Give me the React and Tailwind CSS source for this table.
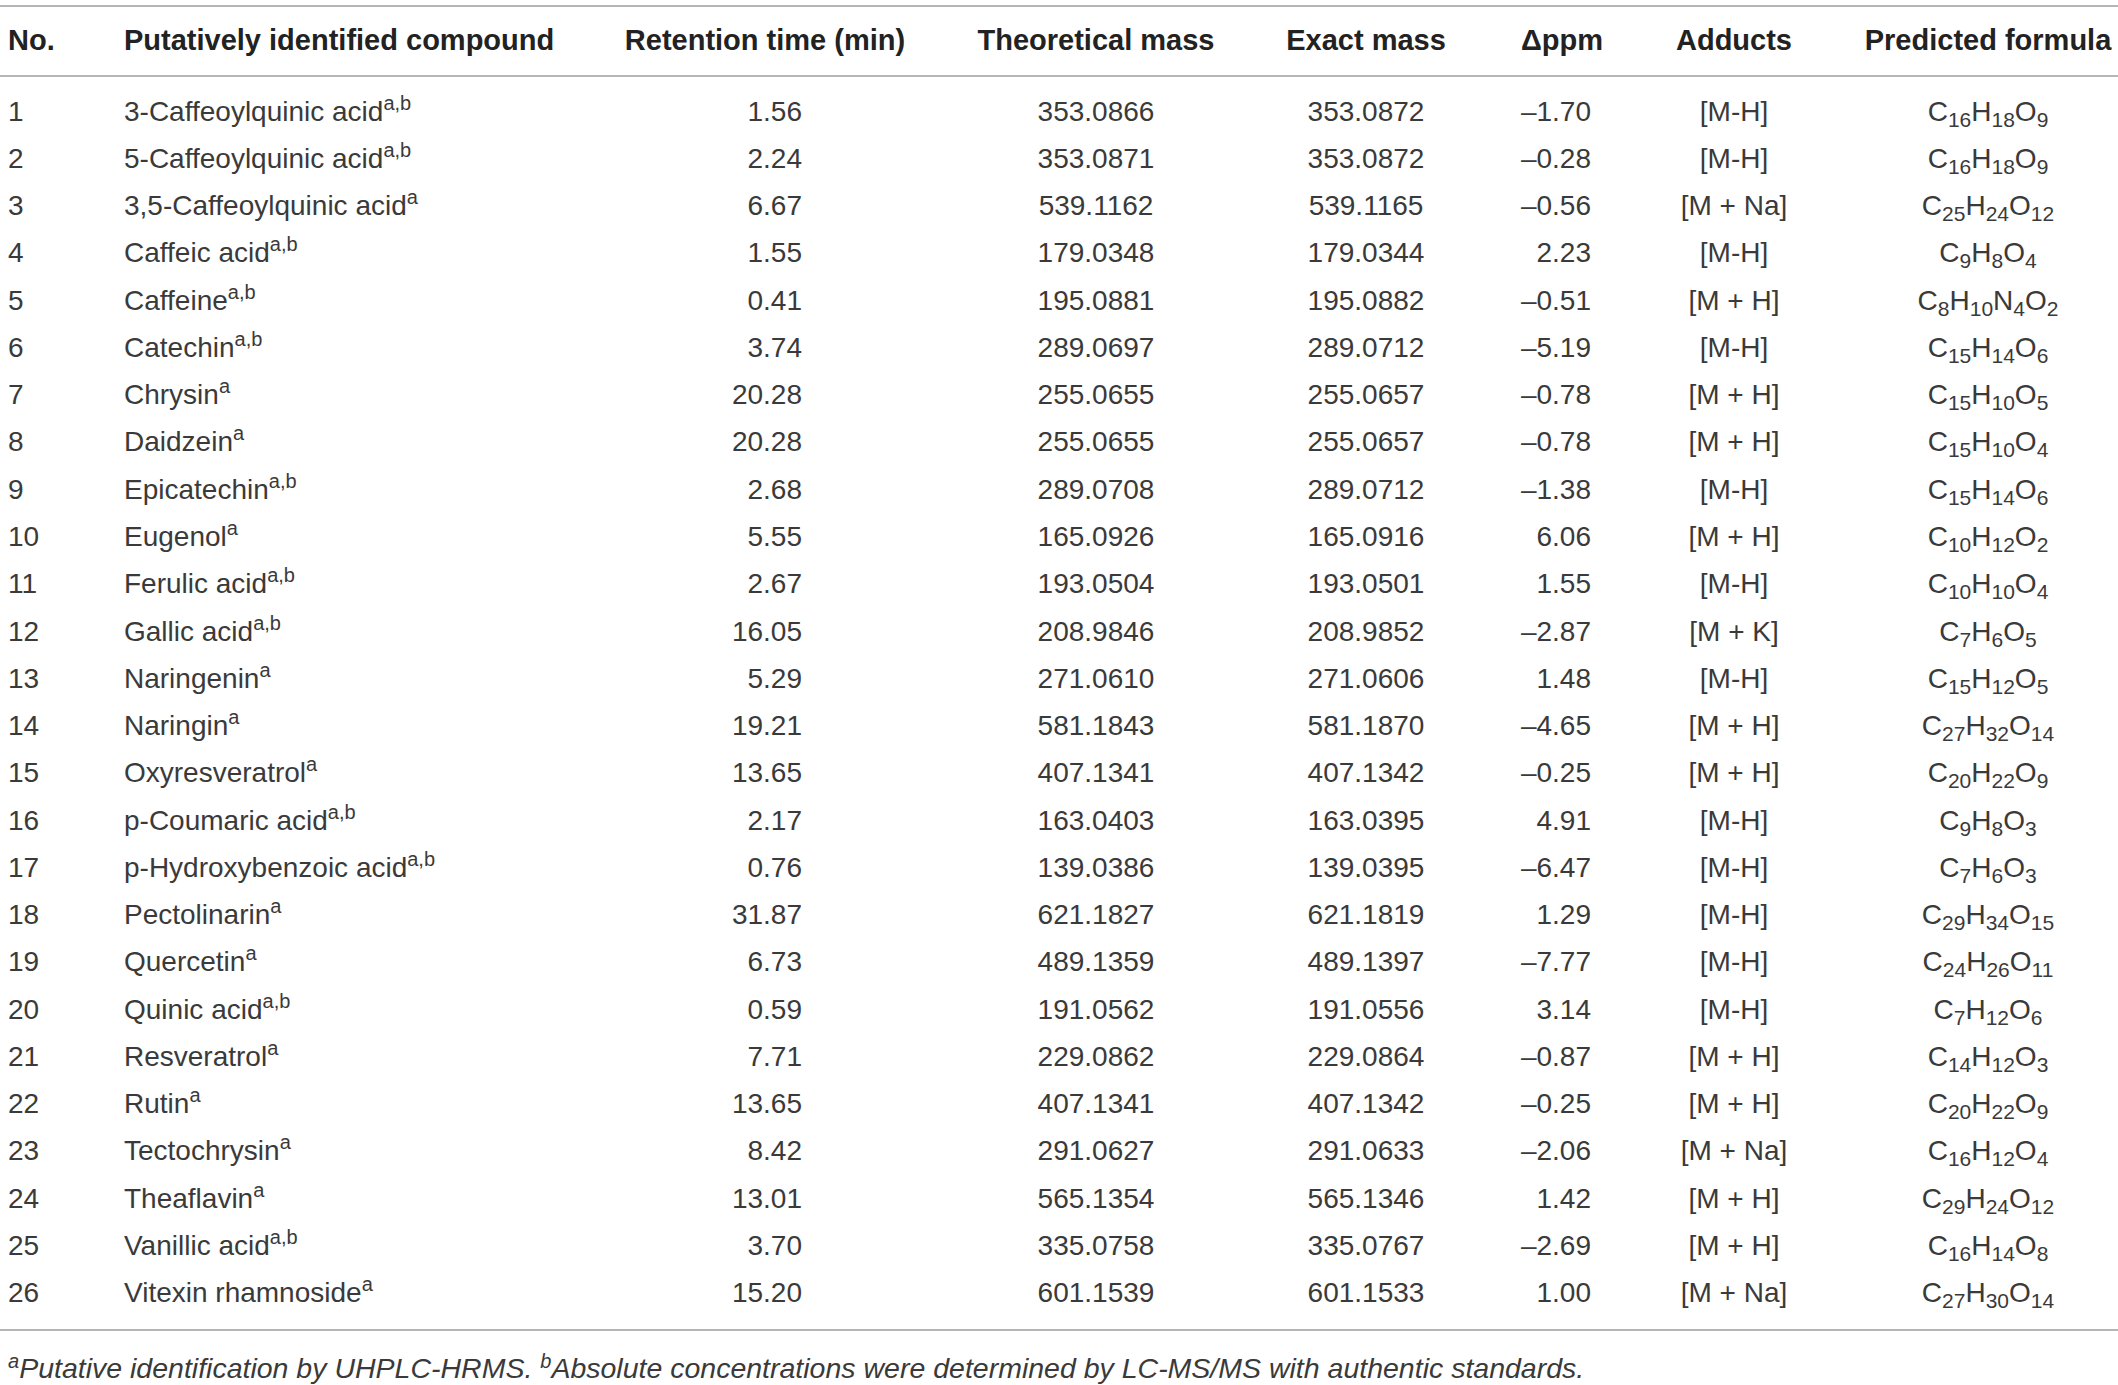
import React from 'react';

const ROWS = [
  ['1', '3-Caffeoylquinic acid', 'a,b', '1.56', '353.0866', '353.0872', '–1.70', '[M-H]', 'C16H18O9'],
  ['2', '5-Caffeoylquinic acid', 'a,b', '2.24', '353.0871', '353.0872', '–0.28', '[M-H]', 'C16H18O9'],
  ['3', '3,5-Caffeoylquinic acid', 'a', '6.67', '539.1162', '539.1165', '–0.56', '[M + Na]', 'C25H24O12'],
  ['4', 'Caffeic acid', 'a,b', '1.55', '179.0348', '179.0344', '2.23', '[M-H]', 'C9H8O4'],
  ['5', 'Caffeine', 'a,b', '0.41', '195.0881', '195.0882', '–0.51', '[M + H]', 'C8H10N4O2'],
  ['6', 'Catechin', 'a,b', '3.74', '289.0697', '289.0712', '–5.19', '[M-H]', 'C15H14O6'],
  ['7', 'Chrysin', 'a', '20.28', '255.0655', '255.0657', '–0.78', '[M + H]', 'C15H10O5'],
  ['8', 'Daidzein', 'a', '20.28', '255.0655', '255.0657', '–0.78', '[M + H]', 'C15H10O4'],
  ['9', 'Epicatechin', 'a,b', '2.68', '289.0708', '289.0712', '–1.38', '[M-H]', 'C15H14O6'],
  ['10', 'Eugenol', 'a', '5.55', '165.0926', '165.0916', '6.06', '[M + H]', 'C10H12O2'],
  ['11', 'Ferulic acid', 'a,b', '2.67', '193.0504', '193.0501', '1.55', '[M-H]', 'C10H10O4'],
  ['12', 'Gallic acid', 'a,b', '16.05', '208.9846', '208.9852', '–2.87', '[M + K]', 'C7H6O5'],
  ['13', 'Naringenin', 'a', '5.29', '271.0610', '271.0606', '1.48', '[M-H]', 'C15H12O5'],
  ['14', 'Naringin', 'a', '19.21', '581.1843', '581.1870', '–4.65', '[M + H]', 'C27H32O14'],
  ['15', 'Oxyresveratrol', 'a', '13.65', '407.1341', '407.1342', '–0.25', '[M + H]', 'C20H22O9'],
  ['16', 'p-Coumaric acid', 'a,b', '2.17', '163.0403', '163.0395', '4.91', '[M-H]', 'C9H8O3'],
  ['17', 'p-Hydroxybenzoic acid', 'a,b', '0.76', '139.0386', '139.0395', '–6.47', '[M-H]', 'C7H6O3'],
  ['18', 'Pectolinarin', 'a', '31.87', '621.1827', '621.1819', '1.29', '[M-H]', 'C29H34O15'],
  ['19', 'Quercetin', 'a', '6.73', '489.1359', '489.1397', '–7.77', '[M-H]', 'C24H26O11'],
  ['20', 'Quinic acid', 'a,b', '0.59', '191.0562', '191.0556', '3.14', '[M-H]', 'C7H12O6'],
  ['21', 'Resveratrol', 'a', '7.71', '229.0862', '229.0864', '–0.87', '[M + H]', 'C14H12O3'],
  ['22', 'Rutin', 'a', '13.65', '407.1341', '407.1342', '–0.25', '[M + H]', 'C20H22O9'],
  ['23', 'Tectochrysin', 'a', '8.42', '291.0627', '291.0633', '–2.06', '[M + Na]', 'C16H12O4'],
  ['24', 'Theaflavin', 'a', '13.01', '565.1354', '565.1346', '1.42', '[M + H]', 'C29H24O12'],
  ['25', 'Vanillic acid', 'a,b', '3.70', '335.0758', '335.0767', '–2.69', '[M + H]', 'C16H14O8'],
  ['26', 'Vitexin rhamnoside', 'a', '15.20', '601.1539', '601.1533', '1.00', '[M + Na]', 'C27H30O14'],
];

const COLS = 'grid grid-cols-[124px_476px_330px_332px_208px_184px_160px_348px]';

// split "C16H18O9" into element + count pairs
const Formula = ({ f }) => {
  const parts = [...f.matchAll(/([A-Z][a-z]?)(\d*)/g)];
  return (
    <span>
      {parts.map((m, i) => (
        <React.Fragment key={i}>
          {m[1]}
          {m[2] && <sub className="text-[21px] leading-none relative top-[6px] align-baseline">{m[2]}</sub>}
        </React.Fragment>
      ))}
    </span>
  );
};

export default function App() {
  return (
    <div
      className="w-[2118px] h-[1385px] overflow-hidden bg-white text-[#3a3a3a]"
      style={{ fontFamily: '"Liberation Sans", Arial, sans-serif' }}
    >
      <div className="w-[2162px] pt-[5px]">
        {/* Header */}
        <div className={`${COLS} h-[72px] items-center border-y-2 border-[#b5b5b5] text-[29px] font-bold text-[#222]`}>
          <div className="pl-[8px]">No.</div>
          <div className="whitespace-nowrap">Putatively identified compound</div>
          <div className="text-center whitespace-nowrap">Retention time (min)</div>
          <div className="text-center">Theoretical mass</div>
          <div className="text-center">Exact mass</div>
          <div className="text-center">Δppm</div>
          <div className="text-center">Adducts</div>
          <div className="text-center whitespace-nowrap">Predicted formula</div>
        </div>

        {/* Body */}
        <div className="pt-[11px] pb-[12px] border-b-2 border-[#b5b5b5] w-[2118px]">
          {ROWS.map((r) => (
            <div key={r[0]} className={`${COLS} h-[47.28px] items-center text-[28px]`}>
              <div className="pl-[8px]">{r[0]}</div>
              <div className="whitespace-nowrap">
                {r[1]}
                <sup className="text-[20px] relative -top-[11px]">{r[2]}</sup>
              </div>
              <div className="text-right pr-[128px]">{r[3]}</div>
              <div className="text-center">{r[4]}</div>
              <div className="text-center">{r[5]}</div>
              <div className="text-right pr-[63px]">{r[6]}</div>
              <div className="text-center whitespace-nowrap">{r[7]}</div>
              <div className="text-center"><Formula f={r[8]} /></div>
            </div>
          ))}
        </div>

        {/* Footnote */}
        <div className="pl-[8px] pt-[16px] text-[28.5px] italic text-[#3a3a3a] whitespace-nowrap">
          <sup className="text-[20px] relative -top-[10px]">a</sup>Putative identification by UHPLC-HRMS.{' '}
          <sup className="text-[20px] relative -top-[10px]">b</sup>Absolute concentrations were determined by LC-MS/MS with authentic standards.
        </div>
      </div>
    </div>
  );
}
